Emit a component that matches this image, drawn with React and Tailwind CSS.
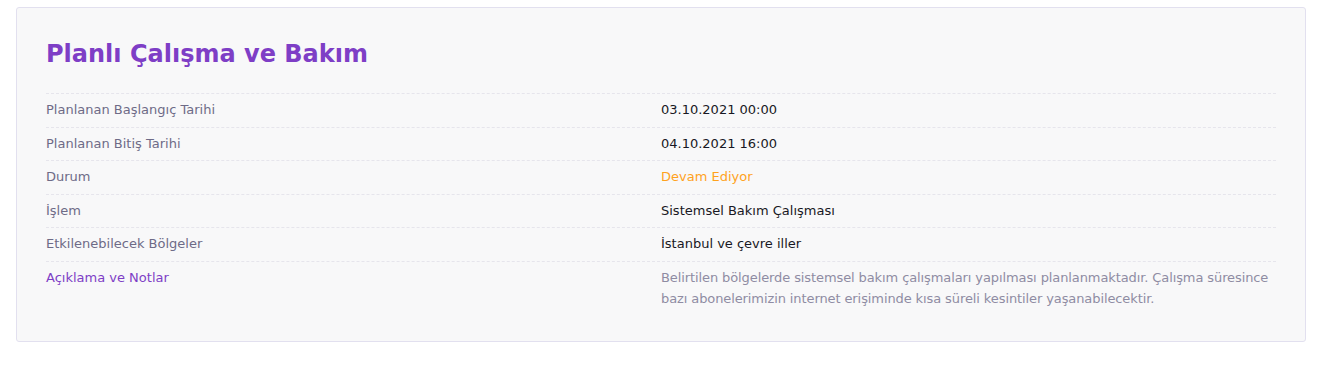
import React from "react";

const rows = [
  { label: "Planlanan Başlangıç Tarihi", value: "03.10.2021 00:00" },
  { label: "Planlanan Bitiş Tarihi", value: "04.10.2021 16:00" },
  { label: "Durum", value: "Devam Ediyor", tone: "status" },
  { label: "İşlem", value: "Sistemsel Bakım Çalışması" },
  { label: "Etkilenebilecek Bölgeler", value: "İstanbul ve çevre iller" },
  {
    label: "Açıklama ve Notlar",
    value:
      "Belirtilen bölgelerde sistemsel bakım çalışmaları yapılması planlanmaktadır. Çalışma süresince bazı abonelerimizin internet erişiminde kısa süreli kesintiler yaşanabilecektir.",
    tone: "note",
  },
];

function Row({ label, value, tone }) {
  const labelColor = tone === "note" ? "text-[#7e3ec6]" : "text-[#6e6b87]";
  let valueColor = "text-[#181824]";
  if (tone === "status") valueColor = "text-[#ffa21d]";
  if (tone === "note") valueColor = "-mt-[2px] text-[#8f8ca3] leading-[21px] tracking-[-0.1px]";
  return (
    <div className="grid grid-cols-2 border-t border-dashed border-[#e6e5ec] py-[7px] text-[13px] leading-[18.5px]">
      <div className={labelColor}>{label}</div>
      <div className={valueColor}>{value}</div>
    </div>
  );
}

export default function App() {
  return (
    <div className="bg-white pl-4 pr-[38px] pt-[7px] pb-[38px]" style={{ fontFamily: "'DejaVu Sans', sans-serif" }}>
      <div className="rounded-[3px] border border-[#e2e0ef] bg-[#f8f8f9] px-[29px] pt-[28px] pb-[25px]">
        <h2 className="mb-[21px] text-[24px] font-semibold leading-[36px] text-[#7e3ec6]">
          Planlı Çalışma ve Bakım
        </h2>
        <div>
          {rows.map((r) => (
            <Row key={r.label} {...r} />
          ))}
        </div>
      </div>
    </div>
  );
}
